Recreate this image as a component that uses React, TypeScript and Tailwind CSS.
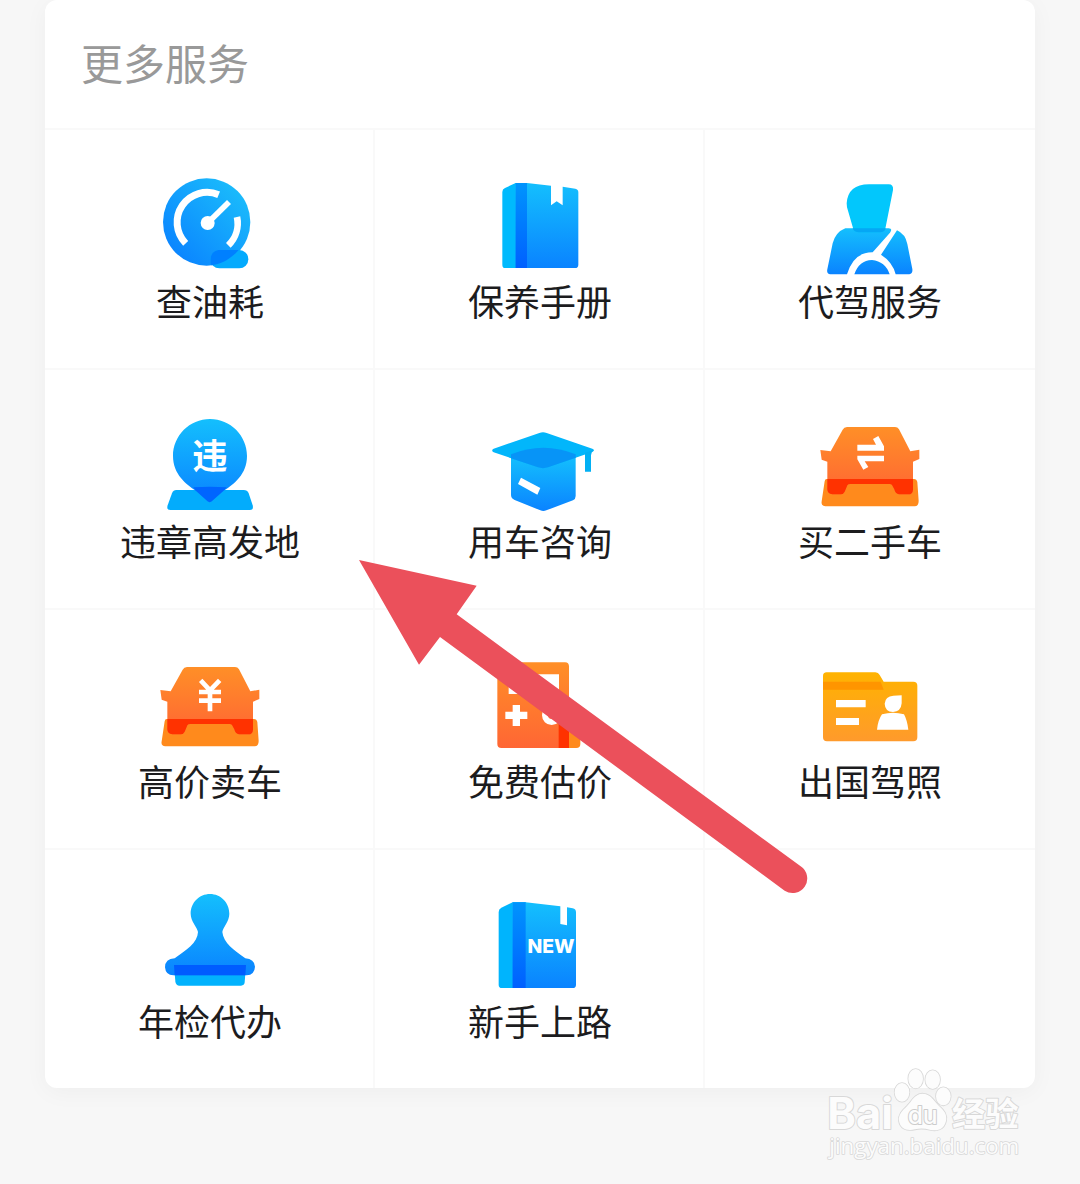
import type { ReactNode } from "react"

interface IconProps {
  viewBox: string
  children: ReactNode
}

function Icon({ viewBox, children }: IconProps) {
  return (
    <svg viewBox={viewBox} className="h-[110px] w-[120px] shrink-0" aria-hidden="true">
      {children}
    </svg>
  )
}

// Gradients shared by all of the service icons
function Gradients() {
  return (
    <svg className="absolute h-0 w-0" aria-hidden="true">
      <defs>
        <linearGradient id="blue" x1="0" y1="0" x2="0" y2="1">
          <stop offset="0" stopColor="#14bffd" />
          <stop offset="1" stopColor="#0a83ff" />
        </linearGradient>
        <linearGradient id="blueSide" x1="1" y1="0" x2="0" y2="1">
          <stop offset="0.1" stopColor="#1bbdfb" />
          <stop offset="0.9" stopColor="#0a83ff" />
        </linearGradient>
        <linearGradient id="blueDeep" x1="0" y1="0" x2="0" y2="1">
          <stop offset="0" stopColor="#0094fd" />
          <stop offset="1" stopColor="#0060ff" />
        </linearGradient>
        <linearGradient id="orange" x1="0" y1="0" x2="0" y2="1">
          <stop offset="0" stopColor="#ff8f27" />
          <stop offset="1" stopColor="#ff6634" />
        </linearGradient>
        <linearGradient id="amber" x1="0" y1="0" x2="0" y2="1">
          <stop offset="0" stopColor="#ffb300" />
          <stop offset="1" stopColor="#ff9a2c" />
        </linearGradient>
      </defs>
    </svg>
  )
}

function GaugeIcon() {
  return (
    <Icon viewBox="30 24 360 330">
      <circle cx="200" cy="186" r="131" fill="url(#blueSide)" />
      <rect x="211" y="270" width="114" height="55" rx="27" fill="#04aafd" />
      <path d="M296 270C273 296 244 313 214 316C207 292 215 270 240 270Z" fill="#0080ff" />
      <path d="M137 250A90 90 0 0 1 236 104" fill="none" stroke="#fff" strokeWidth="21" />
      <path d="M291 171A92 92 0 0 1 265 256" fill="none" stroke="#fff" strokeWidth="20" />
      <path d="M203 189L267 126" stroke="#fff" strokeWidth="17" />
      <circle cx="203" cy="189" r="21" fill="#fff" />
    </Icon>
  )
}

function BookIcon() {
  return (
    <Icon viewBox="30 24 360 330">
      <path d="M97 96Q97 87 105 84L137 69H171V324H105Q97 324 97 314Z" fill="#00bafd" />
      <path d="M137 69H171L243 77V136L260 124L278 136V80L316 86Q325 88 325 97V314Q325 324 315 324H137Z" fill="url(#blue)" />
      <path d="M137 69H171V324H137Z" fill="url(#blueDeep)" />
    </Icon>
  )
}

function DriverIcon() {
  return (
    <Icon viewBox="30 24 360 330">
      <path
        d="M136 205H266Q279 205 270 218L218 277Q161 276 141 343H91Q79 341 82 328L98 250Q107 216 136 205ZM291 211Q316 222 322 252L337 327Q339 341 328 343H287Q278 306 243 284ZM163 343Q177 301 216 300Q256 304 269 343Z"
        fill="url(#blue)"
      />
      <path d="M140 130Q144 73 207 73H266Q281 73 279 90L257 201Q255 217 240 217H177Q162 217 159 204L141 142Z" fill="#02c7fc" />
      <path d="M158 205H257Q254 217 240 217H177Q162 217 158 205Z" fill="#05a7f5" />
    </Icon>
  )
}

function ViolationIcon() {
  return (
    <Icon viewBox="120 24 360 330">
      <path d="M199 270H401Q412 270 416 280L428 316Q432 330 420 330H181Q168 330 173 316L186 280Q190 270 199 270Z" fill="#03acfc" />
      <path d="M300 57C239 57 189 107 189 168C189 223 229 253 256 271L293 304Q299 309 305 304L343 271C371 253 411 223 411 168C411 107 361 57 300 57Z" fill="url(#blue)" />
      <path d="M250 262Q300 258 350 262L343 270L305 304Q299 309 293 304L256 271Z" fill="#0065ff" />
      <text x="300" y="206" textAnchor="middle" fontSize="106" className="fill-white font-['Noto_Sans_CJK_SC',sans-serif] font-bold">
        违
      </text>
    </Icon>
  )
}

function CapIcon() {
  return (
    <Icon viewBox="60 24 360 330">
      <path d="M153 170H347V288Q347 297 339 301L259 331Q250 335 241 331L164 300Q153 295 153 285Z" fill="url(#blue)" />
      <path d="M101 146L238 99Q249 95 260 99L397 146Q407 151 397 156L264 202Q249 207 234 202L101 157Q92 151 101 146Z" fill="#02b6fb" />
      <path d="M153 163Q250 124 347 163V173L264 202Q249 207 234 202L153 175Z" fill="#0794f7" />
      <path d="M375 158L400 150Q394 155 393 166V215H375Z" fill="#02b0f4" />
      <path d="M183 233L241 264L232 284L174 252Z" fill="#fff" />
    </Icon>
  )
}

function CarShape() {
  return (
    <>
      <path d="M80 237H342Q350 237 352 246L356 303Q356 319 344 319H76Q62 318 65 304L74 244Q75 237 80 237Z" fill="#ff8a1c" />
      <path
        d="M141 81H285Q293 81 297 88L331 154L358 149V177L339 185V269Q338 283 325 283H297Q286 281 283 268L276 255Q274 252 269 252H151Q144 252 142 256L134 275Q130 283 122 283H97Q82 282 82 268V185L65 179L61 150L92 154L128 89Q132 81 141 81Z"
        fill="url(#orange)"
      />
      <path
        d="M82 237H339V269Q338 283 325 283H297Q286 281 283 268L276 255Q274 252 269 252H151Q144 252 142 256L134 275Q130 283 122 283H97Q82 282 82 268Z"
        fill="#ff3200"
      />
    </>
  )
}

function BuyCarIcon() {
  return (
    <Icon viewBox="30 24 360 330">
      <CarShape />
      <path d="M172 134H228L219 117L235 108L252 139V152H172ZM172 167H252V184H194L205 201L190 209L172 178Z" fill="#fff" />
    </Icon>
  )
}

function SellCarIcon() {
  return (
    <Icon viewBox="60 24 360 330">
      <g transform="translate(30 0)">
        <CarShape />
      </g>
      <path d="M212 121L240 151L269 121M207 156H273M207 182H273M240 150V214" fill="none" stroke="#fff" strokeWidth="14" />
    </Icon>
  )
}

function CalculatorIcon() {
  return (
    <Icon viewBox="390 294 360 330">
      <path d="M626 520H691V582Q691 594 679 594H626Z" fill="#ff8a1c" />
      <path d="M454 337H645Q657 337 657 350V594H454Q442 594 442 582V350Q442 337 454 337Z" fill="url(#orange)" />
      <path d="M626 520H657V594H626Z" fill="#ff3200" />
      <path d="M476 373H627V432H476Z" fill="#fff" />
      <path d="M499 465V528M466 496H532" stroke="#fff" strokeWidth="22" />
      <circle cx="605" cy="496" r="20" fill="none" stroke="#fff" strokeWidth="18" />
    </Icon>
  )
}

function LicenseIcon() {
  return (
    <Icon viewBox="30 24 360 330">
      <path d="M69 108Q69 97 80 97H226Q235 97 239 105L251 125H340Q352 125 352 137V292Q352 304 340 304H81Q69 304 69 292Z" fill="url(#amber)" />
      <path d="M69 125H242L251 149H69Z" fill="#ff9500" />
      <path d="M108 180H197V202H108ZM108 234H177V255H108Z" fill="#fff" />
      <path d="M305 166V190Q303 215 279 216Q255 215 254 191Q256 168 280 167ZM246 223Q279 213 312 223Q321 239 325 269H231Q234 240 246 223Z" fill="#fff" />
    </Icon>
  )
}

function StampIcon() {
  return (
    <Icon viewBox="60 24 360 330">
      <path d="M132 255H348L344 307Q343 317 333 317H147Q137 316 136 304Z" fill="#02b2fd" />
      <path
        d="M240 42C208 42 182 68 182 101C182 124 202 142 204 156C203 188 168 211 134 235Q105 237 105 262Q107 286 130 286H350Q374 284 375 260Q373 237 346 235C312 211 280 188 277 156C279 142 298 124 298 101C298 68 272 42 240 42Z"
        fill="url(#blue)"
      />
      <path d="M132 255H348L346 286H134Z" fill="#005cff" />
    </Icon>
  )
}

function NewDriverIcon() {
  return (
    <Icon viewBox="60 24 360 330">
      <path d="M116 96Q116 87 124 83L158 67H197V324H126Q116 324 116 314Z" fill="#00b4fd" />
      <path d="M158 67H197L301 79V132L321 136V82L338 85Q348 87 348 97V314Q348 324 338 324H158Z" fill="url(#blue)" />
      <path d="M158 67H197V324H158Z" fill="url(#blueDeep)" />
      <text x="273" y="219" textAnchor="middle" fontSize="58" className="fill-white [font-family:Inter,sans-serif] font-extrabold">
        NEW
      </text>
    </Icon>
  )
}

const services = [
  { name: "查油耗", icon: GaugeIcon },
  { name: "保养手册", icon: BookIcon },
  { name: "代驾服务", icon: DriverIcon },
  { name: "违章高发地", icon: ViolationIcon },
  { name: "用车咨询", icon: CapIcon },
  { name: "买二手车", icon: BuyCarIcon },
  { name: "高价卖车", icon: SellCarIcon },
  { name: "免费估价", icon: CalculatorIcon },
  { name: "出国驾照", icon: LicenseIcon },
  { name: "年检代办", icon: StampIcon },
  { name: "新手上路", icon: NewDriverIcon },
]

function Arrow() {
  return (
    <svg viewBox="0 0 1410 1050" className="pointer-events-none absolute top-[550px] left-[305px] h-[350px] w-[470px]" aria-hidden="true">
      <path d="M27 30L380 107L320 193L1352 949A41 41 0 0 1 1304 1022L270 261L207 344Z" fill="#eb505b" />
    </svg>
  )
}

function Watermark() {
  return (
    <svg viewBox="0 0 840 402" className="pointer-events-none absolute right-0 bottom-0 h-[134px] w-[280px]">
      <g fill="#fcfcfc" stroke="#d8d8d8" strokeWidth="6" strokeLinejoin="round" style={{ paintOrder: "stroke" }}>
        <text x="82" y="236" fontSize="130" className="[font-family:Inter,sans-serif] font-bold">
          Bai
        </text>
        <ellipse cx="306" cy="127" rx="22" ry="28" strokeWidth="5" />
        <ellipse cx="347" cy="86" rx="22" ry="29" strokeWidth="5" />
        <ellipse cx="398" cy="89" rx="22" ry="28" strokeWidth="5" />
        <ellipse cx="430" cy="139" rx="22" ry="27" strokeWidth="5" />
        <path
          d="M367 131C392 131 402 153 417 168C433 182 442 194 438 213C432 240 410 244 389 239Q367 233 345 238C320 244 301 236 297 213C294 193 309 180 322 167C337 151 345 131 367 131Z"
          strokeWidth="5"
        />
        <text x="368" y="222" textAnchor="middle" fontSize="74" stroke="#cccccc" className="[font-family:Inter,sans-serif] font-medium">
          du
        </text>
        <text x="456" y="229" fontSize="100" className="font-['Noto_Sans_CJK_SC',sans-serif] font-bold">
          经验
        </text>
        <text x="88" y="313" fontSize="67" strokeWidth="5" className="[font-family:'Open_Sans',sans-serif]">
          jingyan.baidu.com
        </text>
      </g>
    </svg>
  )
}

export default function App() {
  return (
    <div className="relative min-h-screen bg-[#f7f7f7] px-[45px] pb-24 font-['Noto_Sans_CJK_SC',sans-serif]">
      <Gradients />
      <main className="relative rounded-xl bg-white shadow-[0_4px_24px_rgba(0,0,0,0.04)]">
        <h1 className="flex h-32 items-center px-9 pb-1 text-[42px] leading-[60px] text-[#999999]">更多服务</h1>

        <div className="grid grid-cols-3">
          {services.map(({ name, icon: ServiceIcon }) => (
            <a
              key={name}
              href="#"
              className="flex h-60 flex-col items-center border-t-2 border-r-2 border-[#f9f9f9] pt-[38px] pl-0.5 nth-[3n]:border-r-0 nth-[3n]:pl-0"
            >
              <ServiceIcon />
              <span className="text-4xl leading-[44px] text-[#1c1c1e]">{name}</span>
            </a>
          ))}
          <div className="border-t-2 border-[#f9f9f9]" />
        </div>

        <Arrow />
      </main>

      <Watermark />
    </div>
  )
}
